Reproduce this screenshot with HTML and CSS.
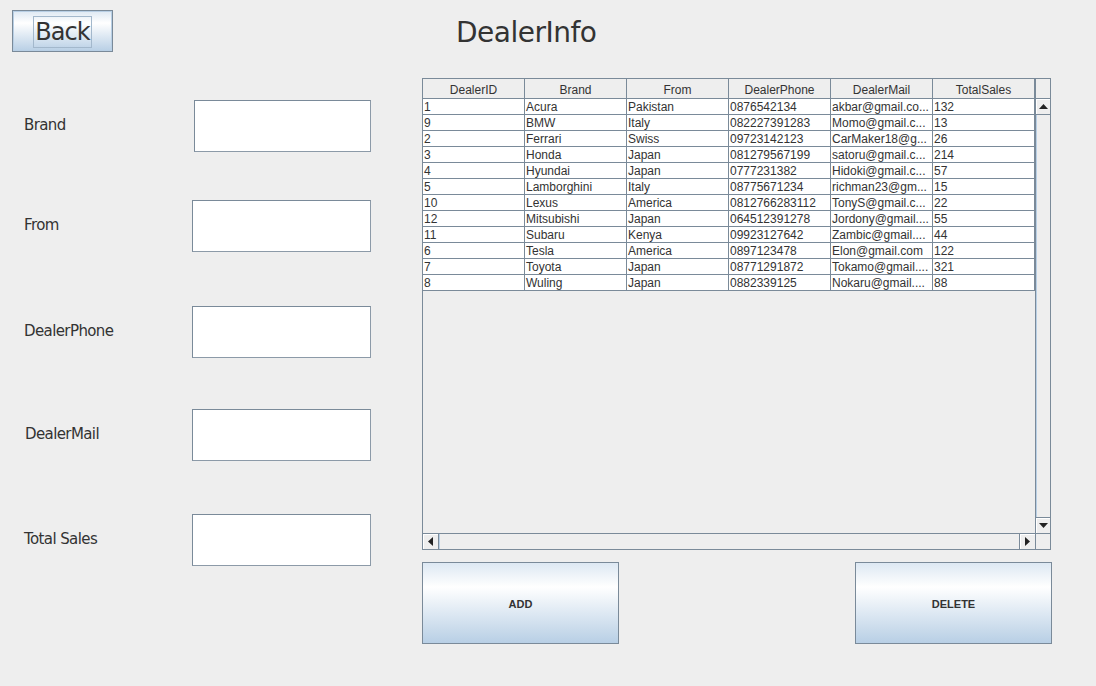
FILE: index.html
```html
<!DOCTYPE html>
<html>
<head>
<meta charset="utf-8">
<title>DealerInfo</title>
<link rel="stylesheet" href="styles.css">
</head>
<body>
<div class="app">
  <header class="top">
    <button class="back-btn"><span class="focus">Back</span></button>
    <h1 class="title">DealerInfo</h1>
  </header>
  <div class="main">
    <form class="form">
      <div class="row row-brand"><label class="lbl">Brand</label><input class="field field-brand" type="text"></div>
      <div class="row row-from"><label class="lbl">From</label><input class="field" type="text"></div>
      <div class="row row-phone"><label class="lbl">DealerPhone</label><input class="field" type="text"></div>
      <div class="row row-mail"><label class="lbl lbl-mail">DealerMail</label><input class="field" type="text"></div>
      <div class="row row-sales"><label class="lbl">Total Sales</label><input class="field" type="text"></div>
    </form>
    <section class="right">
      <div class="scrollpane">
        <div class="viewport">
          <div class="thead">
            <div class="th">DealerID</div><div class="th">Brand</div><div class="th">From</div><div class="th">DealerPhone</div><div class="th">DealerMail</div><div class="th">TotalSales</div>
          </div>
          <div class="tbody">
            <div class="tr"><div class="td">1</div><div class="td">Acura</div><div class="td">Pakistan</div><div class="td">0876542134</div><div class="td">akbar@gmail.co...</div><div class="td">132</div></div>
            <div class="tr"><div class="td">9</div><div class="td">BMW</div><div class="td">Italy</div><div class="td">082227391283</div><div class="td">Momo@gmail.c...</div><div class="td">13</div></div>
            <div class="tr"><div class="td">2</div><div class="td">Ferrari</div><div class="td">Swiss</div><div class="td">09723142123</div><div class="td">CarMaker18@g...</div><div class="td">26</div></div>
            <div class="tr"><div class="td">3</div><div class="td">Honda</div><div class="td">Japan</div><div class="td">081279567199</div><div class="td">satoru@gmail.c...</div><div class="td">214</div></div>
            <div class="tr"><div class="td">4</div><div class="td">Hyundai</div><div class="td">Japan</div><div class="td">0777231382</div><div class="td">Hidoki@gmail.c...</div><div class="td">57</div></div>
            <div class="tr"><div class="td">5</div><div class="td">Lamborghini</div><div class="td">Italy</div><div class="td">08775671234</div><div class="td">richman23@gm...</div><div class="td">15</div></div>
            <div class="tr"><div class="td">10</div><div class="td">Lexus</div><div class="td">America</div><div class="td">0812766283112</div><div class="td">TonyS@gmail.c...</div><div class="td">22</div></div>
            <div class="tr"><div class="td">12</div><div class="td">Mitsubishi</div><div class="td">Japan</div><div class="td">064512391278</div><div class="td">Jordony@gmail....</div><div class="td">55</div></div>
            <div class="tr"><div class="td">11</div><div class="td">Subaru</div><div class="td">Kenya</div><div class="td">09923127642</div><div class="td">Zambic@gmail....</div><div class="td">44</div></div>
            <div class="tr"><div class="td">6</div><div class="td">Tesla</div><div class="td">America</div><div class="td">0897123478</div><div class="td">Elon@gmail.com</div><div class="td">122</div></div>
            <div class="tr"><div class="td">7</div><div class="td">Toyota</div><div class="td">Japan</div><div class="td">08771291872</div><div class="td">Tokamo@gmail....</div><div class="td">321</div></div>
            <div class="tr"><div class="td">8</div><div class="td">Wuling</div><div class="td">Japan</div><div class="td">0882339125</div><div class="td">Nokaru@gmail....</div><div class="td">88</div></div>
          </div>
        </div>
        <div class="vbar">
          <div class="corner-top"></div>
          <div class="sbtn sbtn-v"><svg width="9" height="5" viewBox="0 0 9 5"><path d="M0 5 L4.5 0 L9 5 Z" fill="#222"/></svg></div>
          <div class="track-v"></div>
          <div class="sbtn sbtn-v sbtn-down"><svg width="9" height="5" viewBox="0 0 9 5"><path d="M0 0 L4.5 5 L9 0 Z" fill="#222"/></svg></div>
        </div>
        <div class="hbar">
          <div class="sbtn sbtn-h"><svg width="5" height="9" viewBox="0 0 5 9"><path d="M5 0 L0 4.5 L5 9 Z" fill="#222"/></svg></div>
          <div class="track-h"></div>
          <div class="sbtn sbtn-h sbtn-right"><svg width="5" height="9" viewBox="0 0 5 9"><path d="M0 0 L5 4.5 L0 9 Z" fill="#222"/></svg></div>
        </div>
        <div class="corner-bottom"></div>
      </div>
      <div class="actions">
        <button class="act-btn" type="button">ADD</button>
        <button class="act-btn" type="button">DELETE</button>
      </div>
    </section>
  </div>
</div>
</body>
</html>
```

FILE: styles.css
```css
* { box-sizing: border-box; }
html, body { margin: 0; padding: 0; }
body {
  background: #eeeeee;
  width: 1096px;
  height: 686px;
  overflow: hidden;
  font-family: "DejaVu Sans", "Liberation Sans", sans-serif;
  color: #333333;
}
.app { width: 1096px; height: 686px; }

.top {
  display: flex;
  align-items: center;
  padding: 10px 0 0 12px;
  height: 52px;
}
.back-btn {
  width: 101px;
  height: 42px;
  border: 1px solid #7a8a99;
  box-shadow: inset 0 0 0 1px #b8cfe5;
  background: linear-gradient(to bottom, #dde8f3 0%, #ffffff 30%, #b8cfe5 100%);
  padding: 2px 0 0 0;
  margin: 0;
  display: flex;
  align-items: center;
  justify-content: center;
  font-family: "DejaVu Sans", sans-serif;
  font-size: 24px;
  color: #333333;
}
.back-btn .focus {
  border: 1px solid #a3b8cc;
  padding: 0 1px;
  line-height: 30px;
  letter-spacing: -1px;
}
.title {
  margin: 4px 0 0 343px;
  font-weight: normal;
  font-size: 28px;
  letter-spacing: -0.5px;
  color: #333333;
  line-height: 32px;
}

.main {
  display: flex;
}
.form {
  width: 371px;
  padding: 48px 0 0 24px;
  display: flex;
  flex-direction: column;
}
.row {
  display: flex;
  align-items: center;
  justify-content: space-between;
  height: 52px;
}
.row-from { margin-top: 48px; }
.row-phone { margin-top: 54px; }
.row-mail { margin-top: 51px; }
.row-sales { margin-top: 53px; }
.lbl {
  font-size: 15px;
  color: #333333;
  margin-top: -2px;
  letter-spacing: -0.6px;
}
.lbl-mail { margin-left: 1px; }
.field {
  width: 179px;
  height: 52px;
  border: 1px solid #7a8a99;
  border-right-color: #8c9aa8;
  border-bottom-color: #8c9aa8;
  background: #ffffff;
  margin: 0;
  padding: 0;
}
.field-brand { width: 177px; }

.right {
  margin-left: 51px;
  padding-top: 26px;
  width: 630px;
}
.scrollpane {
  width: 629px;
  height: 472px;
  border: 1px solid #7a8a99;
  display: grid;
  grid-template-columns: 612px 15px;
  grid-template-rows: 454px 16px;
  background: #eeeeee;
}
.viewport {
  font-family: "Liberation Sans", Arial, sans-serif;
  font-size: 12px;
  color: #333333;
  overflow: hidden;
}
.thead, .tr {
  display: grid;
  grid-template-columns: repeat(6, 102px);
}
.th {
  height: 20px;
  border-right: 1px solid #7a8a99;
  border-bottom: 1px solid #7a8a99;
  text-align: center;
  padding-top: 3px;
  line-height: 16px;
  background: #eeeeee;
}
.tbody { background: #ffffff; }
.td {
  height: 16px;
  border-right: 1px solid #7a8a99;
  border-bottom: 1px solid #7a8a99;
  padding: 1px 0 0 1px;
  line-height: 15px;
  white-space: nowrap;
  overflow: hidden;
}

.vbar {
  display: flex;
  flex-direction: column;
  border-left: 1px solid #7a8a99;
}
.corner-top {
  height: 20px;
  border-bottom: 1px solid #7a8a99;
  background: #eeeeee;
}
.sbtn {
  display: flex;
  align-items: center;
  justify-content: center;
  background: #eeeeee;
}
.sbtn-v {
  height: 16px;
  border-bottom: 1px solid #7a8a99;
  box-shadow: inset 1px 1px 0 #ffffff;
}
.sbtn-down { border-top: 1px solid #7a8a99; border-bottom: 0; }
.track-v {
  flex: 1;
  background: #eeeeee;
  border-left: 1px solid #b8cfe5;
}

.hbar {
  display: flex;
  border-top: 1px solid #7a8a99;
}
.sbtn-h {
  width: 16px;
  border-right: 1px solid #7a8a99;
  box-shadow: inset 1px 1px 0 #ffffff;
}
.sbtn-right { border-left: 1px solid #7a8a99; border-right: 0; }
.track-h {
  flex: 1;
  background: #eeeeee;
  border-left: 1px solid #b8cfe5;
}
.corner-bottom {
  border-left: 1px solid #7a8a99;
  border-top: 1px solid #7a8a99;
  background: #eeeeee;
}

.actions {
  display: flex;
  justify-content: space-between;
  margin-top: 12px;
  width: 630px;
}
.act-btn {
  width: 197px;
  height: 82px;
  border: 1px solid #7a8a99;
  background: linear-gradient(to bottom, #dde8f3 0%, #ffffff 30%, #b8cfe5 100%);
  font-family: "Liberation Sans", Arial, sans-serif;
  font-weight: bold;
  font-size: 11px;
  color: #333333;
  padding: 2px 0 0 0;
  margin: 0;
}
```
